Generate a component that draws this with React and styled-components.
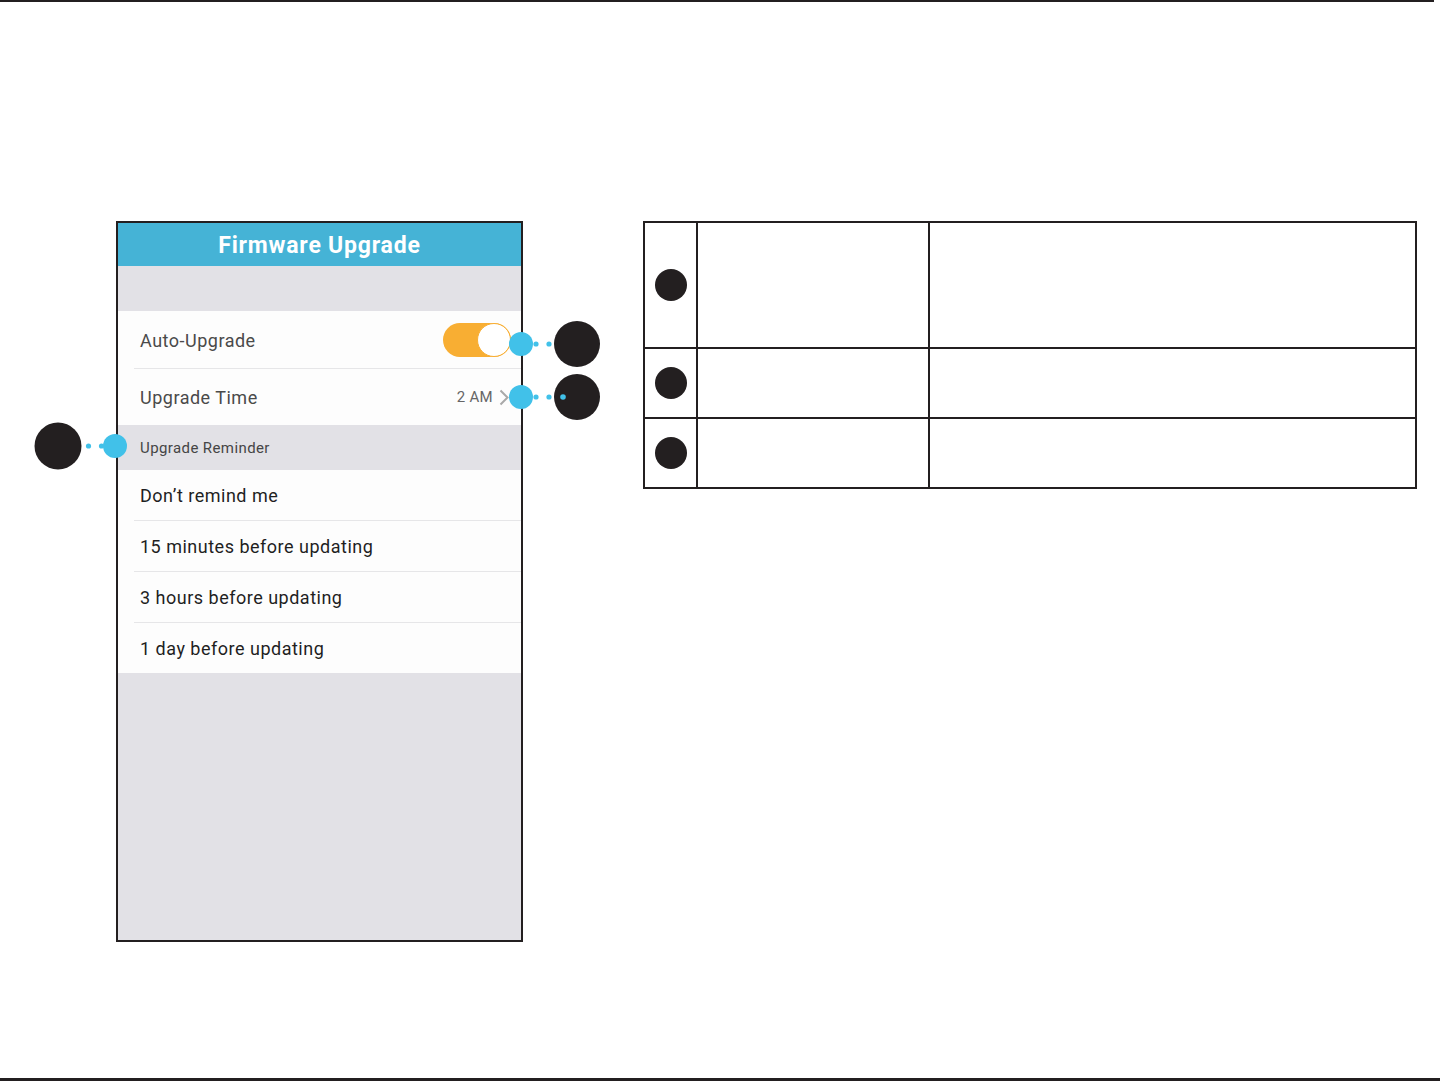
import React from 'react';
import styled, { createGlobalStyle } from 'styled-components';

const GlobalStyle = createGlobalStyle`
  html, body {
    margin: 0;
    padding: 0;
    background: #ffffff;
  }
  body {
    font-family: Roboto, 'Liberation Sans', sans-serif;
  }
`;

const Page = styled.div`
  width: 1440px;
  height: 1081px;
  display: flex;
  flex-direction: column;
  background: #ffffff;
`;

const Rule = styled.div`
  width: ${(p) => p.$width || '100%'};
  height: ${(p) => p.$thickness}px;
  background: #231f20;
  flex-shrink: 0;
`;

const Main = styled.div`
  flex: 1;
  display: flex;
  align-items: flex-start;
  gap: 120px;
  padding: 219px 0 0 116px;
`;

const Phone = styled.div`
  box-sizing: border-box;
  width: 407px;
  height: 721px;
  border: 2px solid #231f20;
  background: #e2e1e6;
  display: flex;
  flex-direction: column;
`;

const TitleBar = styled.div`
  height: 43px;
  background: #45b3d6;
  display: flex;
  align-items: center;
  justify-content: center;
  color: #ffffff;
  font-weight: 700;
  font-size: 23px;
  letter-spacing: 0.8px;
  padding-top: 1px;
  box-sizing: border-box;
`;

const Spacer = styled.div`
  height: ${(p) => p.$height}px;
  flex-shrink: 0;
`;

const Row = styled.div`
  position: relative;
  box-sizing: border-box;
  height: ${(p) => p.$height}px;
  background: #fdfdfd;
  display: flex;
  align-items: center;
  justify-content: space-between;
  padding: 0 10px 0 22px;
  font-size: 18px;
  letter-spacing: 0.5px;
  color: ${(p) => (p.$dark ? '#1f1f1f' : '#4a4a4a')};

  ${(p) =>
    p.$divider &&
    `
    &::after {
      content: '';
      position: absolute;
      left: 16px;
      right: 0;
      bottom: 0;
      height: 1px;
      background: #e6e6e8;
    }
  `}
`;

const SectionHeader = styled.div`
  position: relative;
  height: 45px;
  display: flex;
  align-items: center;
  padding-left: 22px;
  font-size: 15px;
  letter-spacing: 0.4px;
  color: #454545;
`;

const Toggle = styled.div`
  position: relative;
  box-sizing: border-box;
  width: 68px;
  height: 34px;
  border-radius: 17px;
  background: #f8ae33;
`;

const Knob = styled.div`
  position: absolute;
  right: 0;
  top: 0;
  box-sizing: border-box;
  width: 34px;
  height: 34px;
  border-radius: 50%;
  background: #ffffff;
  border: 1.5px solid #f8ae33;
`;

const ValueGroup = styled.div`
  display: flex;
  align-items: center;
  gap: 6px;
  font-size: 15px;
  letter-spacing: 0.3px;
  color: #666666;
  margin-right: 2px;
`;

const CalloutRight = styled.svg`
  position: absolute;
  top: 50%;
  right: -92px;
  transform: translateY(${(p) => p.$shift}px);
  overflow: visible;
`;

const CalloutLeft = styled.svg`
  position: absolute;
  top: 50%;
  left: -84px;
  transform: translateY(-27px);
  overflow: visible;
`;

const Table = styled.table`
  border-collapse: collapse;
  width: 774px;

  td {
    border: 2px solid #231f20;
    padding: 0;
  }
`;

const NumCell = styled.td`
  width: 51px;
  text-align: center;
  vertical-align: middle;
`;

const LabelCell = styled.td`
  width: 230px;
`;

const Bullet = styled.div`
  width: 32px;
  height: 32px;
  border-radius: 50%;
  background: #231f20;
  margin: 0 auto;
`;

const Chevron = () => (
  <svg width="10" height="17" viewBox="0 0 10 17">
    <polyline points="1.5,1.5 8.5,8.5 1.5,15.5" fill="none" stroke="#a9a9a9" strokeWidth="2" />
  </svg>
);

// blue pin on the edge, two dots, then the black number disc
const RightMarker = ({ extraDot, shift }) => (
  <CalloutRight width="104" height="48" $shift={shift} viewBox="0 0 104 48">
    <circle cx="12" cy="24" r="12" fill="#41c1e9" />
    <circle cx="27" cy="24" r="2.6" fill="#41c1e9" />
    <circle cx="40" cy="24" r="2.6" fill="#41c1e9" />
    <circle cx="68" cy="24" r="23" fill="#231f20" />
    {extraDot && <circle cx="54" cy="24" r="2.8" fill="#41c1e9" />}
  </CalloutRight>
);

const LeftMarker = () => (
  <CalloutLeft width="104" height="50" viewBox="0 0 104 50">
    <circle cx="24" cy="25" r="23.5" fill="#231f20" />
    <circle cx="54.5" cy="25" r="2.6" fill="#41c1e9" />
    <circle cx="67.5" cy="25" r="2.6" fill="#41c1e9" />
    <circle cx="81" cy="25" r="12" fill="#41c1e9" />
  </CalloutLeft>
);

const reminders = [
  "Don\u2019t remind me",
  '15 minutes before updating',
  '3 hours before updating',
  '1 day before updating',
];

const rows = [126, 70, 70];

export default function App() {
  return (
    <Page>
      <GlobalStyle />
      <Rule $thickness={2} $width="1434px" />
      <Main>
        <Phone>
          <TitleBar>Firmware Upgrade</TitleBar>
          <Spacer $height={45} />
          <Row $height={58} $divider>
            <span>Auto-Upgrade</span>
            <Toggle>
              <Knob />
            </Toggle>
            <RightMarker shift={-20} />
          </Row>
          <Row $height={56}>
            <span>Upgrade Time</span>
            <ValueGroup>
              <span>2 AM</span>
              <Chevron />
            </ValueGroup>
            <RightMarker shift={-24} extraDot />
          </Row>
          <SectionHeader>
            Upgrade Reminder
            <LeftMarker />
          </SectionHeader>
          {reminders.map((text, i) => (
            <Row key={text} $height={i < 3 ? 51 : 50} $dark $divider={i < 3}>
              <span>{text}</span>
            </Row>
          ))}
        </Phone>
        <Table>
          <tbody>
            {rows.map((h, i) => (
              <tr key={i} style={{ height: h }}>
                <NumCell>
                  <Bullet />
                </NumCell>
                <LabelCell />
                <td />
              </tr>
            ))}
          </tbody>
        </Table>
      </Main>
      <Rule $thickness={3} />
    </Page>
  );
}
